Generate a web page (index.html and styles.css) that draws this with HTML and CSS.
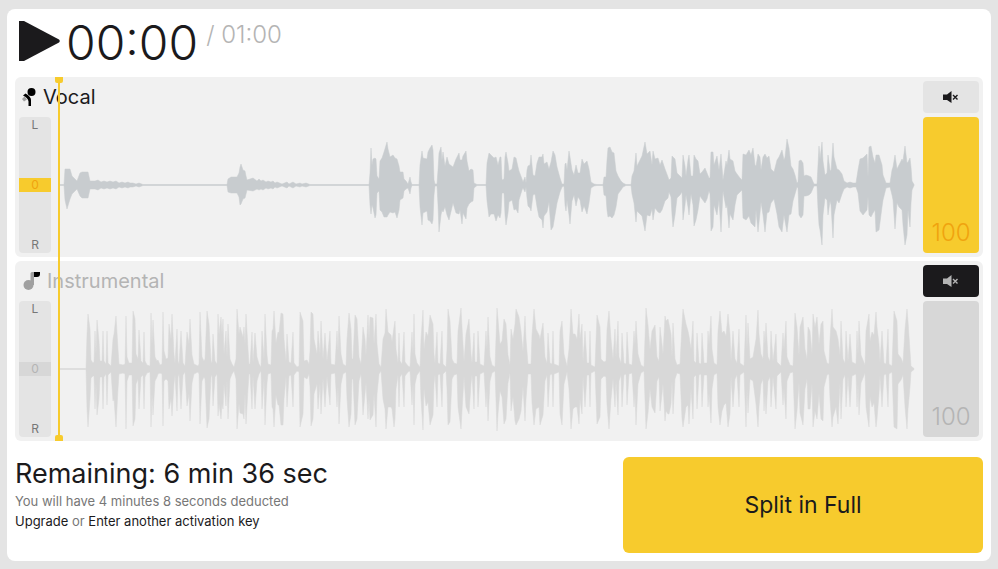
FILE: index.html
```html
<!DOCTYPE html>
<html lang="en">

<head>
    <meta charset="UTF-8" />
    <meta name="viewport" content="width=device-width, initial-scale=1.0" />
    <title>Track Splitter</title>
    <link rel="stylesheet" href="styles.css">
</head>

<body>
    <main class="player">
        <header class="transport">
            <button class="play" type="button" aria-label="Play">
                <svg viewBox="0 0 41 40" width="41" height="40">
                    <path d="M0 0H5L40 18.5Q41.500 20 40 21.500L5 40H0Z" />
                </svg>
            </button>
            <div class="time">00:00</div>
            <div class="total">/ 01:00</div>
        </header>

        <div class="tracks">
            <!-- Vocal -->
            <section class="track">
                <h2 class="track-title">
                    <svg class="track-icon" viewBox="0 0 18 20" width="18" height="20">
                        <path class="icon-soft" d="M1 12L3.500 9.500L6 12.500L3 14.500Z" />
                        <circle cx="10.500" cy="5" r="4" />
                        <path d="M2 8.500L4.500 6.500Q10 9.500 10 13V19H7.500V14.500Q7 11 2 8.500Z" />
                    </svg>
                    Vocal
                </h2>
                <button class="mute" type="button" aria-label="Mute vocal">
                    <svg viewBox="0 0 16 12" width="16" height="12">
                        <path d="M0 3.500H4L8.500 0V12L4 9H0Z" />
                        <path class="cross" d="M10 4L14.500 8.500M14.500 4L10 8.500" />
                    </svg>
                </button>
                <div class="pan">
                    <span class="pan-left">L</span>
                    <label for="pan-vocal" class="pan-value">0</label>
                    <span class="pan-right">R</span>
                    <input type="range" id="pan-vocal" min="-50" max="50" value="0">
                </div>
                <svg class="wave" id="wave-vocal" viewBox="0 0 856 136" preserveAspectRatio="none"></svg>
                <div class="volume">
                    <input type="range" id="volume-vocal" min="0" max="100" value="100">
                    <label for="volume-vocal">100</label>
                </div>
            </section>

            <!-- Instrumental -->
            <section class="track muted">
                <h2 class="track-title">
                    <svg class="track-icon" viewBox="0 0 22 20" width="22" height="20">
                        <circle class="icon-soft" cx="7.500" cy="14" r="5" />
                        <path class="icon-soft" d="M9.500 2.500Q9.500 1 11 1H13V14H9.500Z" />
                        <path d="M13 1H19V3Q19 6 16 6H13Z" />
                    </svg>
                    Instrumental
                </h2>
                <button class="mute" type="button" aria-label="Unmute instrumental" aria-pressed="true">
                    <svg viewBox="0 0 16 12" width="16" height="12">
                        <path d="M0 3.500H4L8.500 0V12L4 9H0Z" />
                        <path class="cross" d="M10 4L14.500 8.500M14.500 4L10 8.500" />
                    </svg>
                </button>
                <div class="pan">
                    <span class="pan-left">L</span>
                    <label for="pan-instrumental" class="pan-value">0</label>
                    <span class="pan-right">R</span>
                    <input type="range" id="pan-instrumental" min="-50" max="50" value="0">
                </div>
                <svg class="wave" id="wave-instrumental" viewBox="0 0 856 136" preserveAspectRatio="none"></svg>
                <div class="volume">
                    <input type="range" id="volume-instrumental" min="0" max="100" value="100">
                    <label for="volume-instrumental">100</label>
                </div>
            </section>

            <div class="playhead"></div>
        </div>

        <footer class="summary">
            <div class="summary-text">
                <h1>Remaining: 6 min 36 sec</h1>
                <p>You will have 4 minutes 8 seconds deducted</p>
                <p><a href="#">Upgrade</a> or <a href="#">Enter another activation key</a></p>
            </div>
            <button class="split" type="button">Split in Full</button>
        </footer>
    </main>

    <script src="waves.js"></script>
</body>

</html>
```
FILE: styles.css
```css
* {
    margin: 0;
    padding: 0;
    box-sizing: border-box;
}

body {
    font-family: Inter, 'Liberation Sans', sans-serif;
    background-color: #e4e4e4;
    color: #1b1a1c;
    padding: 9px 7px 8px;
}

button {
    border: none;
    font: inherit;
    color: inherit;
    cursor: pointer;
}

.player {
    background-color: #fff;
    border-radius: 8px;
    padding: 0 8px 8px;
}

/* Transport */
.transport {
    display: flex;
    align-items: flex-start;
    gap: 6px;
    height: 68px;
    padding: 12px 4px 0;
}

.play {
    background: none;
    height: 40px;
}

.play svg {
    display: block;
    fill: #1b1a1c;
}

.time {
    font-size: 48px;
    line-height: 44px;
    font-weight: 300;
}

.total {
    padding-left: 2px;
    font-size: 24px;
    line-height: 28px;
    font-weight: 300;
    color: #b4b4b4;
}

/* Tracks */
.tracks {
    position: relative;
    display: flex;
    flex-direction: column;
    gap: 4px;
}

.track {
    display: grid;
    grid-template-columns: 32px 1fr 56px;
    grid-template-rows: 32px 136px;
    gap: 4px 8px;
    padding: 4px;
    background-color: #f1f1f1;
    border-radius: 6px;
}

.track-title {
    grid-column: 1 / 3;
    display: flex;
    align-items: center;
    gap: 4px;
    padding-left: 2px;
    font-size: 20px;
    font-weight: 400;
}

.track-icon {
    fill: #000;
}

.icon-soft {
    fill: #a0a0a0;
}

.mute {
    display: flex;
    align-items: center;
    justify-content: center;
    background-color: #e4e4e4;
    border-radius: 4px;
    fill: #1b1a1c;
    stroke: #1b1a1c;
}

.mute path {
    stroke-width: 0;
}

.mute .cross {
    stroke-width: 1.4;
}

.pan {
    display: grid;
    grid-template-rows: 16px 104px 16px;
    align-items: center;
    justify-items: center;
    background-color: #e4e4e4;
    border-radius: 4px;
    font-size: 12px;
    line-height: 16px;
    color: #777;
}

.pan-left {
    grid-area: 1 / 1;
}

.pan-value {
    grid-area: 2 / 1;
    z-index: 1;
    color: #f0a30f;
    pointer-events: none;
}

.pan-right {
    grid-area: 3 / 1;
}

.pan input {
    grid-area: 1 / 1 / 4 / 2;
}

input[type="range"] {
    appearance: none;
    width: 100%;
    height: 136px;
    background: none;
    writing-mode: vertical-lr;
    direction: rtl;
}

.pan input::-webkit-slider-thumb {
    appearance: none;
    width: 32px;
    height: 14px;
    background-color: #f7cb2d;
}

.wave {
    display: block;
    width: 100%;
    height: 136px;
    fill: #c8cccf;
    stroke: #c8cccf;
    stroke-width: 0.5;
    stroke-miterlimit: 10;
}

.volume {
    display: grid;
    background-color: #f7cb2d;
    border-radius: 4px;
    color: #f0a30f;
    font-size: 24px;
    font-weight: 300;
    line-height: 40px;
    text-align: center;
}

.volume input,
.volume label {
    grid-area: 1 / 1;
}

.volume label {
    align-self: end;
    pointer-events: none;
}

.volume input::-webkit-slider-thumb {
    appearance: none;
    width: 56px;
    height: 4px;
    background: transparent;
}

/* Muted track */
.muted .track-title {
    color: #b4b4b4;
}

.muted .mute {
    background-color: #1b1a1c;
    fill: #b4b4b4;
    stroke: #b4b4b4;
}

.muted .pan-value {
    color: #b4b4b4;
}

.muted .pan input::-webkit-slider-thumb {
    background-color: #d7d7d7;
}

.muted .wave {
    fill: #d8d8d8;
    stroke: #d8d8d8;
}

.muted .volume {
    background-color: #d7d7d7;
    color: #b4b4b4;
}

/* Playhead runs over both tracks */
.playhead {
    position: absolute;
    top: 0;
    bottom: 0;
    left: 43px;
    width: 2px;
    background-color: #f7cb2d;
    pointer-events: none;
}

.playhead::before,
.playhead::after {
    content: '';
    position: absolute;
    left: -3px;
    width: 8px;
    height: 6px;
    background-color: #f7cb2d;
}

.playhead::before {
    top: 0;
    border-radius: 0 0 2px 2px;
}

.playhead::after {
    bottom: 0;
    border-radius: 2px 2px 0 0;
}

/* Summary */
.summary {
    display: flex;
    justify-content: space-between;
    margin-top: 16px;
}

.summary h1 {
    font-size: 27px;
    line-height: 34px;
    font-weight: 400;
}

.summary p {
    font-size: 13px;
    line-height: 20px;
    color: #777;
}

.summary a {
    color: #1b1a1c;
    text-decoration: none;
}

.split {
    width: 360px;
    height: 96px;
    background-color: #f7cb2d;
    border-radius: 6px;
    font-size: 23px;
}
```
FILE: waves.js
```js
// Each peak is "x,up,down"; down defaults to up when left out
const vocal = `0,.5 5,.5 6,16,15 8,16,24 11,16,14 13,9 18,4 21,12,11 23,13 29,13 31,4 36,4 39,5 42,3 45,4 48,3 51,4 54,3
57,4 60,2 63,3 66,2 69,3 71,2 74,2 77,1 80,2 84,.5
168,.5 169,6,7 172,8 178,8 180,12 181,18,20 182,21,19 184,15,14 186,14,13 187,9 188,5 194,7,6 198,4 200,6,5 202,4 204,5
207,3 209,4 212,3 214,4 216,2 218,3 223,1 228,3 230,1 234,3 237,1 241,2 243,1 247,2 251,.5
310,.5 311,12,20 312,37,29 313,20 314,26,23 316,27,33 317,26,30 318,9,8 320,6 321,24,25 323,27 325,33,32 328,43,32
329,36,30 331,28,27 334,30,28 336,27 338,26,33 340,19,25 341,13,15 344,13 345,6 347,4 349,1,3 351,8,9 352,3 353,.5
360,.5 361,20,22 363,34,40 364,27,28 368,26 369,33,35 371,37,36 373,40,39 374,35 375,5,10 376,1 378,1 379,15,20
380,32,47 382,38,30 383,25 384,33,27 386,19,22 388,28,30 390,21,35 394,18 397,26,28 400,32,29 401,25 403,25,39
404,29,28 407,34 408,24,23 410,14,19 412,16,17 414,15,16 415,2,3 418,.5
427,.5 428,22,16 430,32 432,30,29 435,27,29 437,28,36 439,20,30 441,28,33 442,28 443,5,8 445,6,8 446,28,30 447,33,40
449,22,28 450,14,17 453,16,15 455,28,25 457,27,24 459,18,28 460,14,15 463,6,5 464,3 466,8,7 467,2 468,15,13
469,19,21 471,20,23 472,30,26 474,10 476,9 478,22 480,28,32 483,28,35 484,31,43 485,21,31 488,23,27 490,16,17
492,23,45 494,34,42 496,30 498,18 501,7 503,1,2 505,1 506,21,20 507,22,26 508,15 510,34,30 511,28,39 513,15,16
515,10 517,20,21 519,12 521,12,15 523,26,27 525,21 528,24,29 530,16,18 532,3 535,1 538,.5
544,.5 545,8,10 547,8,11 548,25 549,37,32 551,38,31 553,33 555,32,30 557,14,22 559,9 562,4,5 564,2 567,.5
572,.5 573,9 575,14,18 577,32,37 578,19,26 581,25,29 583,29,31 586,43,46 588,31,30 591,34,31 593,20,24 594,34,35
596,26,23 599,27 601,20,28 603,25 606,16 609,8,13 610,5,7 612,7,12 613,29,30 614,28,42 616,26,30 618,12,13 621,9,10
623,7 624,30,35 626,19,20 627,9,10 629,25,22 630,30 632,9 634,9,20 635,30,41 637,26,35 639,24,25 641,11 643,13,14
646,17,18 648,12,14 650,7,6 651,7,9 652,33,46 654,33,42 655,20 658,29,30 660,15 662,31,47 664,5,6 667,24,23 668,20
670,35,43 671,26,29 674,24,35 676,14,20 678,11,10 681,7 683,5 684,31,33 687,30,35 690,35,31 692,30,38 694,37,40
696,20,42 697,19,25 699,31,47 701,28 702,15,17 704,28,30 706,31,47 708,27,28 710,29,27 712,16,18 715,13,14 718,25,29
720,28,42 723,35,47 725,25,30 726,28,36 728,46,47 730,37,30 732,19,29 734,16 736,10,9 738,2 739,3 740,24,30
742,25,33 744,22,30 745,9,11 747,10,11 750,9,10 752,8 755,1 758,1 759,20,24 760,39,40 761,26,45 763,43,60 764,24,30
766,10,13 768,12,15 769,30 771,15,16 772,14,20 774,42,53 775,28,30 778,16,15 780,15,18 783,11,9 785,4 788,2 791,3
794,2 797,2 799,15,8 801,26 804,27,30 808,31,25 809,8,12 810,38,30 812,39,32 814,28 816,22,25 817,30,47 820,30,45
823,20,22 824,10,15 827,2,3 831,2 833,15,10 834,18,15 836,30,44 838,16,18 840,20,22 843,26,25 844,24,40 846,39,60
848,22,50 849,23,25 851,27,42 852,18 853,4,5 855,.5`;

const instrumental = `0,.5 27,.5 28,35,40 29,55,58 31,40,30 32,9 34,6,7 35,7 36,38,40 37,15 38,49,46 40,28,30 41,8 43,8 44,38,40
45,8 47,5 48,38,36 49,6 52,3 54,30,32 55,35,30 57,53,58 59,20 60,5 64,4 66,5 67,53,60 68,12 70,6 73,6 74,58,57
76,50 77,15 79,10 80,39,40 82,8 84,6 85,37,40 86,8 88,4 91,3 92,56,58 93,25 94,49,46 96,12 98,8 99,9,5 101,4 103,5
104,57 105,18,12 107,10 109,11,12 110,45,40 112,30 113,55,47 115,15 116,6 118,40,42 119,8 120,5 122,38,40 124,6
126,3 128,37 130,25 131,50,52 133,14 135,5 139,3 140,5 141,57,55 143,12 145,8 146,10 148,58,59 150,45,50 152,8 153,6
154,35,37 156,8 158,5 159,55,47 160,35 162,52,50 163,35 164,50,40 165,15 167,38,37 168,12 169,45,50 171,10 173,5
175,2 177,10 178,60 180,35 181,42,44 184,32,45 185,42,50 186,25 187,55 189,20 190,5 191,5 193,37,40 194,7 196,36,40
198,12 200,5 202,2 203,38,40 205,10 206,55,56 208,14 209,5 212,4 213,38 214,40 215,58 217,26 219,37,36 220,36 222,56
224,55,56 225,30 227,8 228,35,38 230,7 232,6 234,37,38 235,6 238,2 240,3 241,57,58 244,48,45 245,8 248,9,10 250,5
251,18 252,57 254,55,50 255,30,25 258,15 259,38,40 261,15 262,48,45 264,10 266,36,38 268,8 271,38,36 272,5 276,4
278,38 279,18 280,53,55 282,15 284,5 287,3 288,30 290,56,58 292,40,45 293,10 294,10 296,54,56 298,50 300,12 302,5
304,42,46 306,30,25 307,14 309,54,50 310,30 311,52,51 314,51,46 315,25 317,55,58 318,25 320,5 322,2 324,30 326,36,40
327,60 329,37,38 332,34,38 333,27,40 335,42,58 336,48,50 337,20 339,6 340,36,38 341,8 343,5 345,37,38 346,7 349,3
351,2 353,37,36 354,15 355,55,56 356,15 358,6 361,2 362,30 364,59,61 365,20 367,37 369,33 371,54,56 374,45,46 375,15
376,6 378,37,38 379,6 381,5 383,38 384,5 387,2 388,20 389,60,56 391,48,53 393,10 395,6 398,5 399,38 402,61,60
403,42 405,8 407,35,38 410,50,45 412,15 413,6 415,36,40 416,7 418,7 419,38 421,5 425,3 427,38 428,20 429,52 431,12
433,4 436,2 438,61,62 439,50,45 441,25,22 443,28 445,50,55 447,45,50 449,14 451,4 452,40,42 454,30,28 456,45,52
457,60,56 460,52,50 462,38,42 464,18 466,53,52 467,30 469,5 472,5 473,34 475,60,56 477,40 480,34,38 481,30,56 484,46
486,12 488,6 489,36,38 491,6 493,5 494,38 495,5 500,3 501,38,45 503,48,56 505,15 508,3 510,20 511,38,40 512,60
514,35,40 516,35,38 518,30,38 520,55 521,30 523,45 524,8 526,38 528,6 530,6 531,38 532,4 536,2 538,54,55 541,42,48
542,10 545,7 547,8 548,40,36 550,58,60 552,30 554,10 556,40,38 557,12 559,48,46 560,12 562,6 563,36,38 565,6 567,5
568,37,36 570,5 573,4 575,38 576,25 577,48,56 579,15 582,4 585,2 587,61,60 589,44 591,20 593,38 596,44 598,12 600,8
601,42 603,25 604,15 606,53,52 607,48,42 609,50,45 610,45 612,35 613,12 614,46,45 616,10 618,4 621,5 623,45,50
624,60,58 627,45,38 629,38,36 630,33,55 632,20 634,48,50 635,8 637,6 638,36,40 640,6 642,5 643,36,38 645,6 648,6
649,38 650,25 652,53,54 653,20 655,6 658,4 659,38 661,58,56 663,36,42 665,38,36 667,33,34 669,55,58 671,35,45 672,8
674,38 676,10 678,6 680,40,38 681,6 685,3 687,54,58 688,20 689,46,44 691,10 694,12 697,30,35 699,59,58 700,35,38
702,15 704,10 705,38,42 706,25 707,46,45 709,12 711,8 712,38 714,8 717,35,40 718,7 722,3 724,36 725,20 727,48,50
728,12 731,4 734,3 736,56,60 738,42 740,14 741,42,44 744,52,56 746,20 748,10 749,42,40 751,38,40 753,15 754,55,58
756,42 758,52,50 760,25 762,45,50 764,48,52 765,18 768,6 770,5 771,30 773,60,58 774,42,48 777,38 779,30,55 781,14
782,48,50 784,10 786,6 787,38 789,8 791,35,38 793,7 797,5 798,38 799,15 800,48,46 802,14 806,4 807,38 810,55,58
811,28 813,37,38 815,34 817,57,58 818,42,50 820,25 821,7 823,38 825,6 827,5 829,40,38 830,5 833,3 835,58 838,48,60
839,15 842,11 844,6 846,40,38 848,60 849,48,40 851,18 852,3 855,.5`;

function drawWave(id, data) {
    const middle = 68;
    const peaks = data.split(/\s+/).map(peak => peak.split(',').map(Number));
    const top = peaks.map(([x, up]) => `${x} ${middle - up}`);
    const bottom = peaks.map(([x, up, down = up]) => `${x} ${middle + down}`).reverse();
    const path = document.createElementNS('http://www.w3.org/2000/svg', 'path');
    path.setAttribute('d', `M${top.concat(bottom).join('L')}Z`);
    document.getElementById(id).appendChild(path);
}

drawWave('wave-vocal', vocal);
drawWave('wave-instrumental', instrumental);
```
